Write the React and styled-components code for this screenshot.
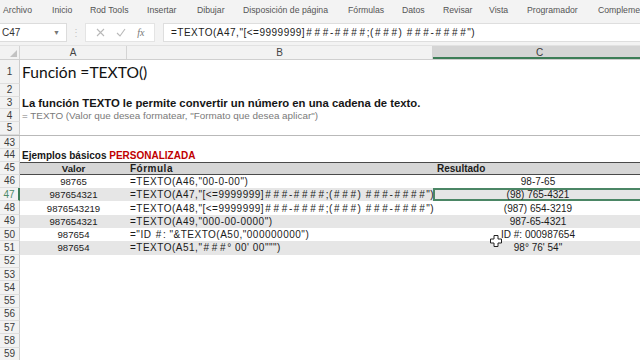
import React from 'react';
import styled, { createGlobalStyle } from 'styled-components';

const Global = createGlobalStyle`
  html, body { margin: 0; padding: 0; background: #fff; overflow: hidden; }
  #root { width: 640px; height: 360px; }
`;

const Frame = styled.div`
  position: relative;
  width: 640px;
  height: 360px;
  overflow: hidden;
  display: flex;
  flex-direction: column;
  background: #fff;
  font-family: "Liberation Sans", Arial, sans-serif;
`;

const Ribbon = styled.nav`
  flex: none;
  height: 20px;
  display: flex;
  align-items: center;
  padding-left: 3px;
  background: #f3f3f3;
  color: #555;
  font-size: 8.7px;
  white-space: nowrap;
  overflow: hidden;
`;

const Tab = styled.span`
  flex: none;
  width: ${p => p.$w}px;
`;

const FormulaBar = styled.div`
  flex: none;
  height: 26px;
  display: flex;
  align-items: center;
  background: #f3f3f3;
  border-bottom: 1px solid #e2e2e2;
  box-sizing: border-box;
`;

const NameBox = styled.div`
  flex: none;
  width: 67px;
  height: 19px;
  box-sizing: border-box;
  display: flex;
  align-items: center;
  justify-content: space-between;
  padding: 0 6px 0 2px;
  background: #fff;
  border: 1px solid #dcdcdc;
  border-left: none;
  font-size: 10px;
  color: #333;
`;

const Caret = styled.span`
  font-size: 7px;
  color: #777;
`;

const Grip = styled.span`
  flex: none;
  width: 18px;
  text-align: center;
  color: #c4c4c4;
  font-size: 10px;
`;

const IconBox = styled.div`
  flex: none;
  width: 70px;
  height: 19px;
  box-sizing: border-box;
  display: flex;
  align-items: center;
  justify-content: space-around;
  padding: 0 4px;
  background: #fff;
  border: 1px solid #e4e4e4;
`;

const Fx = styled.span`
  font-family: "Liberation Serif", serif;
  font-style: italic;
  font-size: 10px;
  color: #777;
`;

const FormulaInput = styled.div`
  flex: 1;
  height: 19px;
  margin-left: 8px;
  box-sizing: border-box;
  display: flex;
  align-items: center;
  padding-left: 7px;
  background: #fff;
  border: 1px solid #dedede;
  border-right: none;
  font-size: 10px;
  letter-spacing: 0.5px;
  color: #222;
  white-space: pre;
`;

const FormulaText = styled.span`
  white-space: pre;
`;

const Hash = styled.span`
  margin: 0 1.1px;
`;

const Sheet = styled.div`
  flex: 1;
  display: flex;
  flex-direction: column;
  overflow: hidden;
`;

const Row = styled.div`
  flex: none;
  display: grid;
  grid-template-columns: 20px 107px 306px 214px;
  height: ${p => p.$h}px;
`;

const HeadRow = styled(Row)`
  background: #f2f2f2;
  border-bottom: 1px solid #cfcfcf;
  box-sizing: border-box;
`;

const ColHead = styled.div`
  display: flex;
  align-items: center;
  justify-content: center;
  font-size: 10px;
  color: ${p => (p.$sel ? '#3a3a3a' : '#444')};
  background: ${p => (p.$sel ? '#d5d5d5' : 'transparent')};
  border-right: 1px solid #d4d4d4;
  box-shadow: ${p => (p.$sel ? 'inset 0 -2px 0 #3d7d57' : 'none')};
`;

const Corner = styled.div`
  display: flex;
  align-items: flex-end;
  justify-content: flex-end;
  padding: 0 2px 2px 0;
  border-right: 1px solid #d4d4d4;
`;

const RowHead = styled.div`
  display: flex;
  align-items: center;
  justify-content: center;
  font-size: 10px;
  color: ${p => (p.$sel ? '#4d8a66' : '#3c3c3c')};
  background: #f2f2f2;
  border-right: ${p => (p.$sel ? '2px solid #3d7d57' : '1px solid #cdcdcd')};
  border-bottom: 1px solid #dedede;
  box-sizing: border-box;
`;

const Freeze = styled.div`
  flex: none;
  height: 1.5px;
  background: #b9b9b9;
`;

const Band = styled.div`
  grid-column: 2 / -1;
  display: grid;
  grid-template-columns: 107px 306px 214px;
  background: ${p => (p.$tone === 'head' ? '#d6d6d6' : p.$tone === 'alt' ? '#e6e6e6' : '#fff')};
  border-top: ${p => (p.$tone === 'head' ? '1px solid #4a4a4a' : 'none')};
  border-bottom: ${p => (p.$tone === 'head' ? '1px solid #4a4a4a' : 'none')};
  box-sizing: border-box;
`;

const Cell = styled.div`
  display: flex;
  align-items: center;
  white-space: pre;
  color: #1b1b1b;
  font-weight: ${p => (p.$bold ? 700 : 400)};
`;

const ValueCell = styled(Cell)`
  justify-content: center;
  font-size: 9.6px;
`;

const FormulaCell = styled(Cell)`
  padding-left: 3px;
  font-size: 10px;
  letter-spacing: 0.5px;
`;

const ResultCell = styled(Cell)`
  justify-content: ${p => (p.$left ? 'flex-start' : 'center')};
  padding-left: ${p => (p.$left ? 4 : 0)}px;
  padding-right: ${p => (p.$left ? 0 : 4)}px;
  font-size: 10px;
  box-shadow: ${p => (p.$sel ? 'inset 0 0 0 2px #4b8665' : 'none')};
`;

const Wide = styled.div`
  grid-column: 2 / -1;
  display: flex;
  align-items: center;
  padding-left: 2px;
  white-space: pre;
  color: ${p => p.$color || '#161616'};
  font-size: ${p => p.$size || 10}px;
  font-weight: ${p => (p.$bold ? 700 : 400)};
`;

const Title = styled(Wide)`
  font-family: "Lato", "Liberation Sans", sans-serif;
  font-weight: 400;
  font-size: 15.6px;
  color: #111;
`;

const Red = styled.span`
  color: #c00000;
`;

const Cursor = styled.svg`
  position: absolute;
  left: 490px;
  top: 235px;
`;

const tabs = [
  ['Archivo', 49], ['Inicio', 38], ['Rod Tools', 57], ['Insertar', 50], ['Dibujar', 46],
  ['Disposición de página', 105], ['Fórmulas', 54], ['Datos', 41], ['Revisar', 46],
  ['Vista', 38], ['Programador', 71], ['Complementos', 80],
];

const data = [
  ['46', '98765', '=TEXTO(A46,"00-0-00")', '98-7-65'],
  ['47', '987654321', '=TEXTO(A47,"[<=9999999]###-####;(###) ###-####")', '(98) 765-4321'],
  ['48', '9876543219', '=TEXTO(A48,"[<=9999999]###-####;(###) ###-####")', '(987) 654-3219'],
  ['49', '987654321', '=TEXTO(A49,"000-00-0000")', '987-65-4321'],
  ['50', '987654', '="ID #: "&TEXTO(A50,"000000000")', 'ID #: 000987654'],
  ['51', '987654', '=TEXTO(A51,"###° 00\' 00""")', '98° 76\' 54"'],
];

const empty = ['52', '53', '54', '55', '56', '57', '58', '59'];

function Formula({ text }) {
  return (
    <FormulaText>
      {text.split(/(#)/).map((s, i) => (s === '#' ? <Hash key={i}>#</Hash> : s))}
    </FormulaText>
  );
}

export default function App() {
  return (
    <Frame>
      <Global />
      <Ribbon>
        {tabs.map(([t, w]) => (
          <Tab key={t} $w={w}>{t}</Tab>
        ))}
      </Ribbon>
      <FormulaBar>
        <NameBox>
          C47<Caret>▼</Caret>
        </NameBox>
        <Grip>⋮</Grip>
        <IconBox>
          <svg width="9" height="9" viewBox="0 0 9 9">
            <path d="M1 1 L8 8 M8 1 L1 8" stroke="#b8b8b8" strokeWidth="1.1" />
          </svg>
          <svg width="10" height="9" viewBox="0 0 10 9">
            <path d="M1 5 L4 8 L9 1" stroke="#b8b8b8" strokeWidth="1.1" fill="none" />
          </svg>
          <Fx>fx</Fx>
        </IconBox>
        <FormulaInput>
          <Formula text={'=TEXTO(A47,"[<=9999999]###-####;(###) ###-####")'} />
        </FormulaInput>
      </FormulaBar>
      <Sheet>
        <HeadRow $h={14}>
          <Corner>
            <svg width="7" height="7" viewBox="0 0 7 7">
              <path d="M7 0 L7 7 L0 7 Z" fill="#c2c2c2" />
            </svg>
          </Corner>
          <ColHead>A</ColHead>
          <ColHead>B</ColHead>
          <ColHead $sel>C</ColHead>
        </HeadRow>

        <Row $h={24}>
          <RowHead>1</RowHead>
          <Title>Función =TEXTO()</Title>
        </Row>
        <Row $h={12.7}>
          <RowHead>2</RowHead>
        </Row>
        <Row $h={12.7}>
          <RowHead>3</RowHead>
          <Wide $bold $size={11.3}>La función TEXTO le permite convertir un número en una cadena de texto.</Wide>
        </Row>
        <Row $h={12.7}>
          <RowHead>4</RowHead>
          <Wide $color="#7a7a7a" $size={9.9}>= TEXTO (Valor que desea formatear, "Formato que desea aplicar")</Wide>
        </Row>
        <Row $h={12.7}>
          <RowHead>5</RowHead>
        </Row>
        <Freeze />
        <Row $h={12.7}>
          <RowHead>43</RowHead>
        </Row>
        <Row $h={12.6}>
          <RowHead>44</RowHead>
          <Wide $bold>
            Ejemplos básicos <Red>PERSONALIZADA</Red>
          </Wide>
        </Row>
        <Row $h={13.3}>
          <RowHead>45</RowHead>
          <Band $tone="head">
            <ValueCell $bold>Valor</ValueCell>
            <FormulaCell $bold>Fórmula</FormulaCell>
            <ResultCell $bold $left>Resultado</ResultCell>
          </Band>
        </Row>
        {data.map(([n, v, f, r], i) => (
          <Row key={n} $h={13.3}>
            <RowHead $sel={n === '47'}>{n}</RowHead>
            <Band $tone={i % 2 === 1 ? 'alt' : 'plain'}>
              <ValueCell>{v}</ValueCell>
              <FormulaCell>
                <Formula text={f} />
              </FormulaCell>
              <ResultCell $sel={n === '47'}>{r}</ResultCell>
            </Band>
          </Row>
        ))}
        {empty.map(n => (
          <Row key={n} $h={13.3}>
            <RowHead>{n}</RowHead>
          </Row>
        ))}
      </Sheet>
      <Cursor width="12" height="12" viewBox="0 0 12 12">
        <path
          d="M4 0.5 H8 V4 H11.5 V8 H8 V11.5 H4 V8 H0.5 V4 H4 Z"
          fill="#fff"
          stroke="#222"
          strokeWidth="1"
        />
      </Cursor>
    </Frame>
  );
}
